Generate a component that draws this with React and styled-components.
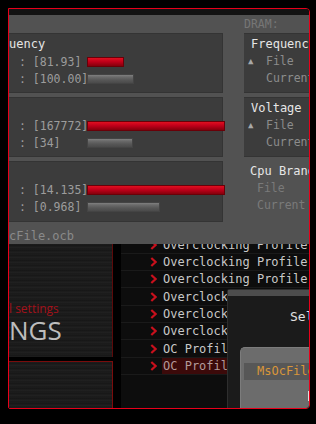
import React from 'react'
import styled, { createGlobalStyle } from 'styled-components'

const Global = createGlobalStyle`
  html, body {
    margin: 0;
    background: #000;
  }
  body {
    padding: 8px;
    font-family: "DejaVu Sans Mono", "Liberation Mono", monospace;
  }
`

const leftBoxes = [
	{ title: 'uency', rows: [{ v: ': [81.93]', w: 37, red: true }, { v: ': [100.00]', w: 47 }] },
	{ title: '', rows: [{ v: ': [167772]', w: 138, red: true }, { v: ': [34]', w: 46 }] },
	{ title: '', rows: [{ v: ': [14.135]', w: 138, red: true }, { v: ': [0.968]', w: 73 }], h: 61 },
]

const profiles = [
	'Overclocking Profile 1',
	'Overclocking Profile 2',
	'Overclocking Profile 3',
	'Overclocking Profile 4',
	'Overclocking Profile 5',
	'Overclocking Profile 6',
	'OC Profile Save to USB',
	'OC Profile Load from USB',
]

function Chevron() {
	return (
		<ChevronIcon width="7" height="10" viewBox="0 0 7 10">
			<polyline points="1.3,1 5.6,5 1.3,9" fill="none" stroke="#c8101c" strokeWidth="2.2" />
		</ChevronIcon>
	)
}

function App() {
	return (
		<>
			<Global />
			<Frame>
				<TopStrip />
				<Window>
					<DramLabel>DRAM:</DramLabel>
					<LeftCol>
						{leftBoxes.map((box, i) => (
							<Box key={i} $h={box.h || 60}>
								<Title $pad={0}>{box.title}</Title>
								{box.rows.map((r, j) => (
									<ValueRow key={j}>
										<ValueText>{r.v}</ValueText>
										<Bar $w={r.w} $red={r.red} />
									</ValueRow>
								))}
							</Box>
						))}
					</LeftCol>
					<RightCol>
						<Box $h={60}>
							<Title $pad={7}>Frequency</Title>
							<InfoRow><Arrow>▲</Arrow>File</InfoRow>
							<InfoRow><Arrow />Current</InfoRow>
						</Box>
						<Box $h={60}>
							<Title $pad={7}>Voltage</Title>
							<InfoRow><Arrow>▲</Arrow>File</InfoRow>
							<InfoRow><Arrow />Current</InfoRow>
						</Box>
						<Plain>
							<Title $pad={6}>Cpu Brand</Title>
							<PlainRow>File</PlainRow>
							<PlainRow>Current</PlainRow>
						</Plain>
					</RightCol>
					<StatusBar>cFile.ocb</StatusBar>
				</Window>
				<Lower>
					<SideCol>
						<SidePanel>
							<Subtitle>l settings</Subtitle>
							<BigTitle>NGS</BigTitle>
						</SidePanel>
						<SidePanel $bottom />
					</SideCol>
					<List>
						<Rows>
							{profiles.map((p, i) => (
								<Row key={i}>
									<Chevron />
									<RowText $active={i === profiles.length - 1}>{p}</RowText>
								</Row>
							))}
						</Rows>
					</List>
					<Dialog>
						<DialogBar />
						<DialogTitle>Select a file</DialogTitle>
						<FilePanel>
							<FileRow>MsOcFile.ocb</FileRow>
							<Caret />
						</FilePanel>
					</Dialog>
				</Lower>
			</Frame>
		</>
	)
}

const Frame = styled.div`
	width: 302px;
	height: 401px;
	box-sizing: border-box;
	border: 1px solid #e8001a;
	border-radius: 0 4px 4px 2px;
	overflow: hidden;
	background: #000;
	display: flex;
	flex-direction: column;
`

const TopStrip = styled.div`
	height: 6px;
	flex-shrink: 0;
	background: #131313;
`

const Window = styled.div`
	height: 229px;
	flex-shrink: 0;
	background: #525252;
	display: grid;
	grid-template-columns: 214px 90px;
	grid-template-rows: 18px 189px 22px;
	column-gap: 21px;
	overflow: hidden;
	position: relative;
	z-index: 1;
`

const DramLabel = styled.div`
	grid-column: 2;
	font-size: 11.5px;
	line-height: 18px;
	color: #767676;
`

const LeftCol = styled.div`
	grid-column: 1;
	display: flex;
	flex-direction: column;
	gap: 4px;
`

const RightCol = styled.div`
	grid-column: 2;
	display: flex;
	flex-direction: column;
	gap: 4px;
	white-space: nowrap;
`

const Box = styled.div`
	height: ${p => p.$h}px;
	box-sizing: border-box;
	flex-shrink: 0;
	background: #3c3c3c;
	border: 1px solid #343434;
	border-left: none;
	padding-top: 2px;
`

const Title = styled.div`
	height: 17px;
	line-height: 17px;
	font-size: 12px;
	color: #e6e6e6;
	padding-left: ${p => p.$pad}px;
	white-space: nowrap;
`

const ValueRow = styled.div`
	height: 17px;
	display: flex;
	align-items: center;
`

const ValueText = styled.div`
	width: 78px;
	flex-shrink: 0;
	box-sizing: border-box;
	padding-left: 10px;
	white-space: pre;
	font-size: 11.5px;
	color: #9c9c9c;
`

const Bar = styled.div`
	width: ${p => p.$w}px;
	height: 10px;
	flex-shrink: 0;
	box-sizing: border-box;
	background: ${p => p.$red
		? 'linear-gradient(#e01020, #c0001a 45%, #85000c)'
		: 'linear-gradient(#808080, #6a6a6a 25%, #585858 60%, #4a4a4a)'};
	border: 1px solid ${p => p.$red ? '#6a0008' : '#444'};
`

const InfoRow = styled.div`
	height: 17px;
	line-height: 17px;
	display: flex;
	padding-left: 4px;
	font-size: 11.5px;
	color: #8c8c8c;
`

const Arrow = styled.span`
	width: 18px;
	flex-shrink: 0;
	font-size: 9px;
	color: #a8a8a8;
`

const Plain = styled.div`
	padding-top: 2px;
`

const PlainRow = styled.div`
	height: 17px;
	line-height: 17px;
	padding-left: 13px;
	font-size: 11.5px;
	color: #7a7a7a;
`

const StatusBar = styled.div`
	grid-column: 1 / -1;
	box-sizing: border-box;
	padding-top: 6px;
	line-height: 16px;
	font-size: 12px;
	color: #8a8a8a;
`

const Lower = styled.div`
	flex: 1;
	display: flex;
	position: relative;
	overflow: hidden;
	background: #000;
`

const SideCol = styled.div`
	width: 104px;
	flex-shrink: 0;
	display: flex;
	flex-direction: column;
	gap: 4px;
`

const SidePanel = styled.div`
	height: ${p => p.$bottom ? 'auto' : '113px'};
	flex: ${p => p.$bottom ? 1 : 'none'};
	box-sizing: border-box;
	padding-top: ${p => p.$bottom ? 0 : 58}px;
	background: repeating-linear-gradient(180deg, #1d1d1d 0px, #161616 2px, #222 3px, #191919 5px);
	border-right: 1px solid ${p => p.$bottom ? '#7a0c0c' : '#5c0a0a'};
	border-top: ${p => p.$bottom ? '1px solid #7a0c0c' : 'none'};
	font-family: "Open Sans", "Noto Sans", sans-serif;
	white-space: nowrap;
	overflow: hidden;
`

const Subtitle = styled.div`
	font-size: 12px;
	line-height: 14px;
	color: #a3111a;
`

const BigTitle = styled.div`
	font-size: 26px;
	line-height: 28px;
	color: #bdbdbd;
`

const List = styled.div`
	flex: 1;
	min-width: 0;
	margin-left: 8px;
	background: #0d0d0d;
	overflow: hidden;
`

const Rows = styled.div`
	margin-top: -7.5px;
`

const Row = styled.div`
	height: 17.33px;
	box-sizing: border-box;
	display: flex;
	align-items: center;
	padding-left: 29px;
	border-bottom: 1px solid #1a1a1a;
	white-space: nowrap;
`

const ChevronIcon = styled.svg`
	flex-shrink: 0;
	display: block;
`

const RowText = styled.span`
	align-self: stretch;
	display: flex;
	align-items: center;
	margin-left: 5px;
	padding-left: 1px;
	flex: 1;
	min-width: 0;
	font-size: 12px;
	color: ${p => p.$active ? '#b39a9a' : '#c8c8c8'};
	background: ${p => p.$active ? '#3c0a0a' : 'transparent'};
`

const Dialog = styled.div`
	position: absolute;
	left: 218px;
	top: 45px;
	width: 130px;
	height: 140px;
	background: #1b1b1b;
	border-left: 1px solid #2e2e2e;
	border-top: 1px solid #2e2e2e;
	border-radius: 3px 0 0 0;
	z-index: 2;
`

const DialogBar = styled.div`
	height: 6px;
	background: radial-gradient(circle, #4e4e4e 0.7px, transparent 1px) 0 0 / 2px 2px, #262626;
`

const DialogTitle = styled.div`
	margin-top: 13px;
	padding-left: 62px;
	line-height: 16px;
	font-size: 13px;
	color: #e0e0e0;
	white-space: nowrap;
`

const FilePanel = styled.div`
	position: relative;
	margin: 22px 0 0 12px;
	height: 80px;
	box-sizing: border-box;
	padding: 15px 0 0 3px;
	background: #6c6c6c;
	border-top: 1px solid #7c7c7c;
	border-left: 1px solid #7c7c7c;
	border-radius: 5px 0 0 0;
`

const FileRow = styled.div`
	height: 17px;
	line-height: 17px;
	padding-left: 13px;
	background: #575757;
	font-size: 12px;
	color: #d9963a;
	white-space: nowrap;
`

const Caret = styled.div`
	position: absolute;
	left: 67px;
	top: 43px;
	width: 1px;
	height: 10px;
	background: #ddd;
`

export default App
